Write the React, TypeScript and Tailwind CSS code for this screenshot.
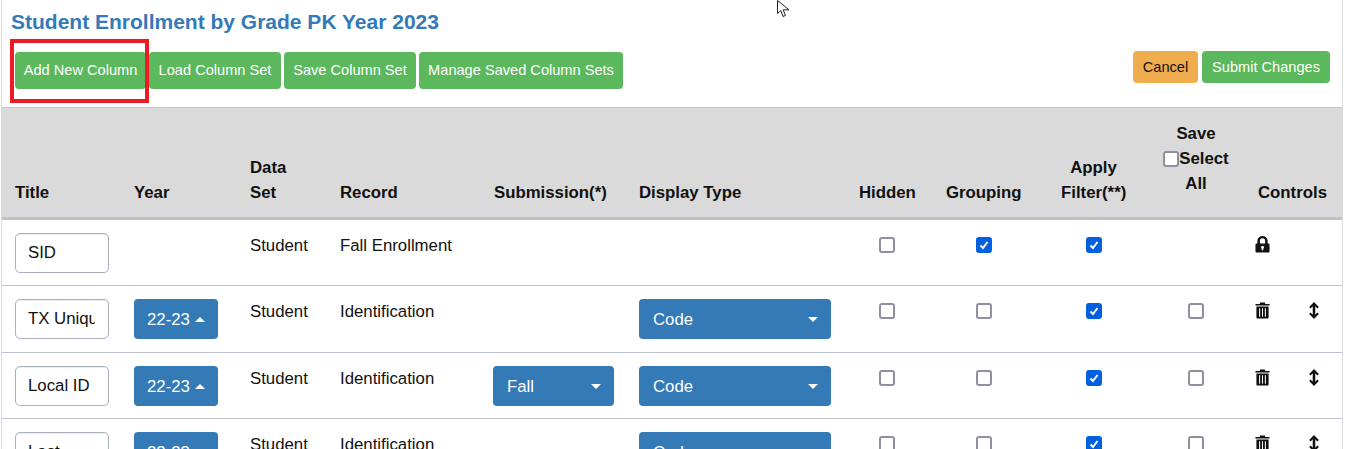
const COLUMN_WIDTHS = [119, 116, 90, 154, 145, 220, 87, 115, 103, 94, 97];

const ROWS = [
  { title: "SID", height: "h-[66px]", year: false, record: "Fall Enrollment", submission: false, display: false, hidden: false, grouping: true, filter: true, locked: true },
  { title: "TX Unique ID", height: "h-[67px]", year: true, record: "Identification", submission: false, display: true, hidden: false, grouping: false, filter: true, locked: false },
  { title: "Local ID", height: "h-[66px]", year: true, record: "Identification", submission: true, display: true, hidden: false, grouping: false, filter: true, locked: false },
  { title: "Last", height: "h-[66px]", year: true, record: "Identification", submission: false, display: true, hidden: false, grouping: false, filter: true, locked: false },
];

function Checkbox({ checked = false }: { checked?: boolean }) {
  return (
    <span
      className={`inline-flex h-4 w-4 items-center justify-center rounded-[3px] border-2 align-top ${
        checked ? "border-[#0060df] bg-[#0060df]" : "border-[#8f8f9d] bg-white"
      }`}
    >
      {checked && (
        <svg width="12" height="12" viewBox="0 0 12 12" fill="none">
          <path d="M2.5 6.5 L5 9 L9.5 3" stroke="#fff" strokeWidth="2" />
        </svg>
      )}
    </span>
  );
}

function Dropdown({ label, width, up = false }: { label: string; width: string; up?: boolean }) {
  return (
    <div className={`flex h-10 items-center justify-between rounded-[4px] bg-[#337ab7] text-white ${width} ${up ? "pl-[13px] pr-[13px]" : "pl-[14px] pr-[13px]"}`}>
      <span>{label}</span>
      <svg width="10" height="5" viewBox="0 0 10 5" fill="#fff">
        <path d={up ? "M0 5 L5 0 L10 5 Z" : "M0 0 L10 0 L5 5 Z"} />
      </svg>
    </div>
  );
}

function LockIcon() {
  return (
    <svg width="15" height="17" viewBox="0 0 16 18" fill="#111" preserveAspectRatio="none">
      <path
        fillRule="evenodd"
        d="M2.5 8 V5.2 A5.5 5.2 0 0 1 13.5 5.2 V8 H14.5 A1 1 0 0 1 15.5 9 V16.5 A1 1 0 0 1 14.5 17.5 H1.5 A1 1 0 0 1 0.5 16.5 V9 A1 1 0 0 1 1.5 8 Z M5.2 8 H10.8 V5.2 A2.8 2.8 0 0 0 5.2 5.2 Z M8 10.5 A1.6 1.6 0 0 0 7.2 13.5 V15 H8.8 V13.5 A1.6 1.6 0 0 0 8 10.5 Z"
      />
    </svg>
  );
}

function TrashIcon() {
  return (
    <svg width="15" height="17" viewBox="0 0 16 18" fill="#111" preserveAspectRatio="none">
      <path d="M5.5 0.5 H10.5 L11 2 H15.5 V3.8 H0.5 V2 H5 Z" />
      <path
        fillRule="evenodd"
        d="M1.5 4.8 H14.5 V16.5 A1 1 0 0 1 13.5 17.5 H2.5 A1 1 0 0 1 1.5 16.5 Z M4.4 6.5 V15.5 H5.5 V6.5 Z M7.45 6.5 V15.5 H8.55 V6.5 Z M10.5 6.5 V15.5 H11.6 V6.5 Z"
      />
    </svg>
  );
}

function ArrowsIcon() {
  return (
    <svg width="10" height="17" viewBox="0 0 11 18" fill="#111" preserveAspectRatio="none">
      <path d="M5.5 0 L10.8 5.2 L9.2 6.8 L6.9 4.6 V13.4 L9.2 11.2 L10.8 12.8 L5.5 18 L0.2 12.8 L1.8 11.2 L4.1 13.4 V4.6 L1.8 6.8 L0.2 5.2 Z" />
    </svg>
  );
}

export default function App() {
  return (
    <div className="relative h-[449px] w-[1355px] overflow-hidden bg-white font-['Liberation_Sans',Arial,sans-serif] text-[16.8px] text-[#111]">
      <div className="ml-px h-full w-[1342px] border-x border-[#dddddd]">
        <h3 className="pl-[9px] pt-[10px] text-[21px] leading-[23px] font-bold text-[#337ab7]">
          Student Enrollment by Grade PK Year 2023
        </h3>

        <div className="flex h-[74px] justify-between pl-[13px] pr-3">
          <div className="flex items-start gap-[3px] pt-[19px] text-[14.6px] text-white">
            <button className="h-[37px] w-[131px] rounded-[4px] bg-[#5cb85c] pt-px">Add New Column</button>
            <button className="h-[37px] w-[132px] rounded-[4px] bg-[#5cb85c] pt-px">Load Column Set</button>
            <button className="h-[37px] w-[132px] rounded-[4px] bg-[#5cb85c] pt-px">Save Column Set</button>
            <button className="h-[37px] w-[204px] rounded-[4px] bg-[#5cb85c] pt-px">Manage Saved Column Sets</button>
          </div>
          <div className="flex items-start gap-1 pt-[18px] text-[14.6px]">
            <button className="h-8 w-[65px] rounded-[4px] bg-[#f0ad4e] pt-px">Cancel</button>
            <button className="h-8 w-[128px] rounded-[4px] bg-[#5cb85c] pt-px text-white">Submit Changes</button>
          </div>
        </div>

        <table className="w-[1340px] table-fixed border-collapse leading-[25px]">
          <colgroup>
            {COLUMN_WIDTHS.map((w, i) => (
              <col key={i} style={{ width: w }} />
            ))}
          </colgroup>
          <thead>
            <tr className="border-t border-b-[3px] border-t-[#c4c8ce] border-b-[#bcc2cc] bg-[#dadada] font-bold">
              <th className="h-[111px] px-[13px] pb-[12px] text-left align-bottom">Title</th>
              <th className="px-[13px] pb-[12px] text-left align-bottom">Year</th>
              <th className="px-[13px] pb-[12px] text-left align-bottom">Data Set</th>
              <th className="px-[13px] pb-[12px] text-left align-bottom">Record</th>
              <th className="px-[13px] pb-[12px] text-left align-bottom">Submission(*)</th>
              <th className="px-[13px] pb-[12px] text-left align-bottom">Display Type</th>
              <th className="px-[13px] pb-[12px] text-left align-bottom">Hidden</th>
              <th className="px-[13px] pb-[12px] text-left align-bottom">Grouping</th>
              <th className="pl-[13px] pr-[25px] pb-[12px] text-center align-bottom">Apply Filter(**)</th>
              <th className="pl-[10px] pr-[14px] pb-[21px] text-center align-bottom">
                Save
                <br />
                <span className="whitespace-nowrap">
                  <span className="inline-block h-[21px] pt-[5px] align-top">
                    <Checkbox />
                  </span>
                  Select
                </span>
                <br />
                All
              </th>
              <th className="px-[13px] pb-[12px] text-left align-bottom">Controls</th>
            </tr>
          </thead>
          <tbody>
            {ROWS.map((row) => (
              <tr key={row.title} className="border-b border-[#bcc2cc]">
                <td className={`${row.height} px-[13px] pt-[13px] pb-3 align-top`}>
                  <input
                    readOnly
                    value={row.title}
                    className="h-10 w-[94px] rounded-[5px] border border-[#a9b0bb] bg-white pl-[12px] pr-[13px] shadow-[inset_0_1px_1px_rgba(0,0,0,0.075)]"
                  />
                </td>
                <td className="px-[13px] pt-[13px] pb-3 align-top">
                  {row.year && <Dropdown label="22-23" width="w-[84px]" up />}
                </td>
                <td className="px-[13px] pt-[13px] pb-3 align-top">Student</td>
                <td className="px-[13px] pt-[13px] pb-3 align-top">{row.record}</td>
                <td className="px-3 pt-[13px] pb-3 align-top">
                  {row.submission && <Dropdown label="Fall" width="w-[121px]" />}
                </td>
                <td className="px-[13px] pt-[13px] pb-3 align-top">
                  {row.display && <Dropdown label="Code" width="w-[192px]" />}
                </td>
                <td className="pl-[33px] pt-[17px] align-top">
                  <Checkbox checked={row.hidden} />
                </td>
                <td className="pl-[43px] pt-[17px] align-top">
                  <Checkbox checked={row.grouping} />
                </td>
                <td className="pl-[38px] pt-[17px] align-top">
                  <Checkbox checked={row.filter} />
                </td>
                <td className="pl-[37px] pt-[17px] align-top">
                  {!row.locked && <Checkbox />}
                </td>
                <td className="pl-[10px] pt-[16px] align-top">
                  {row.locked ? (
                    <LockIcon />
                  ) : (
                    <div className="flex items-center gap-[39px]">
                      <TrashIcon />
                      <ArrowsIcon />
                    </div>
                  )}
                </td>
              </tr>
            ))}
          </tbody>
        </table>
      </div>

      {/* annotation over the first button */}
      <div className="absolute left-[10px] top-[39px] h-[64px] w-[139px] border-[4px] border-[#ed1c24]" />

      {/* mouse pointer caught in the capture */}
      <svg className="absolute left-[777px] top-0" width="14" height="19" viewBox="0 0 14 19" fill="#fff" stroke="#222" strokeWidth="1">
        <path d="M0.5 0.5 V13.5 L3.8 10.6 L6 16.5 L8.4 15.5 L6.2 9.8 H12 Z" />
      </svg>
    </div>
  );
}
